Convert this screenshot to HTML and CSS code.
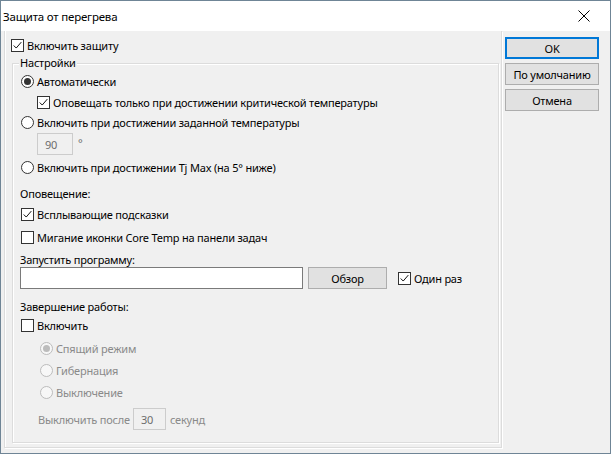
FILE: index.html
```html
<!DOCTYPE html>
<html lang="ru">
<head>
    <meta charset="UTF-8">
    <title>Защита от перегрева</title>
    <link rel="stylesheet" href="styles.css">
</head>
<body>
    <div class="window">
        <div class="titlebar">
            <span class="title">Защита от перегрева</span>
            <svg class="close" width="12" height="12" viewBox="0 0 12 12">
                <path d="M0.5 0.5 L11.5 11.5 M11.5 0.5 L0.5 11.5" stroke="#000" stroke-width="1" fill="none"/>
            </svg>
        </div>
        <div class="client">
            <div class="panel">
                <div class="row main-check">
                    <span class="check on"><svg viewBox="0 0 13 13"><path d="M2 6.5 L5 9.5 L11 2.5" /></svg></span>
                    <span>Включить защиту</span>
                </div>
                <div class="group">
                    <span class="legend">Настройки</span>
                    <div class="row r-auto"><span class="radio on"></span><span>Автоматически</span></div>
                    <div class="row r-notify indent">
                        <span class="check on"><svg viewBox="0 0 13 13"><path d="M2 6.5 L5 9.5 L11 2.5" /></svg></span>
                        <span>Оповещать только при достижении критической температуры</span>
                    </div>
                    <div class="row r-temp"><span class="radio"></span><span>Включить при достижении заданной температуры</span></div>
                    <div class="row r-field indent">
                        <span class="field disabled small">90</span>
                        <span class="deg">°</span>
                    </div>
                    <div class="row r-tj"><span class="radio"></span><span>Включить при достижении Tj Max (на 5° ниже)</span></div>

                    <div class="row r-head caption">Оповещение:</div>
                    <div class="row r-popup">
                        <span class="check on"><svg viewBox="0 0 13 13"><path d="M2 6.5 L5 9.5 L11 2.5" /></svg></span>
                        <span>Всплывающие подсказки</span>
                    </div>
                    <div class="row r-blink"><span class="check"></span><span>Мигание иконки Core Temp на панели задач</span></div>

                    <div class="row r-run caption">Запустить программу:</div>
                    <div class="row r-program">
                        <span class="field wide"></span>
                        <button class="btn browse">Обзор</button>
                        <span class="check on once"><svg viewBox="0 0 13 13"><path d="M2 6.5 L5 9.5 L11 2.5" /></svg></span>
                        <span>Один раз</span>
                    </div>

                    <div class="row r-shut caption">Завершение работы:</div>
                    <div class="row r-enable"><span class="check"></span><span>Включить</span></div>
                    <div class="row r-sleep sub off"><span class="radio on"></span><span>Спящий режим</span></div>
                    <div class="row r-hib sub off"><span class="radio"></span><span>Гибернация</span></div>
                    <div class="row r-power sub off"><span class="radio"></span><span>Выключение</span></div>
                    <div class="row r-after off">
                        <span>Выключить после</span>
                        <span class="field disabled tiny">30</span>
                        <span>секунд</span>
                    </div>
                </div>
            </div>
            <div class="buttons">
                <button class="btn default">OK</button>
                <button class="btn">По умолчанию</button>
                <button class="btn">Отмена</button>
            </div>
        </div>
    </div>
</body>
</html>
```

FILE: styles.css
```css
body {
    margin: 0;
    font-family: "Noto Sans", "Open Sans", sans-serif;
    font-size: 11px;
    letter-spacing: -0.2px;
    color: #000;
    background: #f0f0f0;
}
.window {
    width: 609px;
    height: 452px;
    border: 1px solid #6f8596;
    display: flex;
    flex-direction: column;
    background: #f0f0f0;
}
.titlebar {
    height: 30px;
    background: #fff;
    display: flex;
    align-items: center;
    justify-content: space-between;
    padding: 0 20px 0 2px;
}
.title {
    font-size: 11.5px;
}
.close {
    display: block;
}
.client {
    flex-grow: 1;
    display: flex;
    padding: 0 0 5px 3px;
}
.panel {
    width: 498px;
    border: 1px solid #dcdcdc;
    border-top: none;
    box-shadow: 1px 1px 0 #fff, inset 1px 0 0 #fff;
    padding: 6px 0 0 7px;
    box-sizing: border-box;
}
.buttons {
    display: flex;
    flex-direction: column;
    gap: 4px;
    padding: 6px 0 0 3px;
}
.btn {
    font-family: inherit;
    font-size: 11px;
    letter-spacing: -0.2px;
    color: #000;
    width: 94px;
    height: 22px;
    padding: 0;
    background: #e1e1e1;
    border: 1px solid #adadad;
}
.btn.default {
    border-color: #0078d7;
    box-shadow: inset 0 0 0 1px #0078d7;
}
.row {
    display: flex;
    align-items: center;
    height: 16px;
    white-space: nowrap;
}
.main-check {
    margin-left: -1px;
}
.check {
    width: 11px;
    height: 11px;
    border: 1px solid #333;
    background: #fff;
    margin-right: 3px;
    flex-shrink: 0;
}
.check svg {
    display: block;
    width: 11px;
    height: 11px;
}
.check path {
    fill: none;
    stroke: #000;
    stroke-width: 1.1;
}
.radio {
    width: 11px;
    height: 11px;
    border: 1px solid #333;
    border-radius: 50%;
    background: #fff;
    margin-right: 3px;
    flex-shrink: 0;
    display: flex;
    align-items: center;
    justify-content: center;
}
.radio.on::after {
    content: "";
    width: 7px;
    height: 7px;
    border-radius: 50%;
    background: #333;
}
.group {
    position: relative;
    width: 487px;
    height: 380px;
    box-sizing: border-box;
    margin-top: 10px;
    border: 1px solid #dcdcdc;
    box-shadow: 1px 1px 0 #fff, inset 1px 1px 0 #fff;
    padding: 0 0 0 8px;
}
.legend {
    position: absolute;
    top: -9px;
    left: 6px;
    padding: 0 1px;
    background: #f0f0f0;
    line-height: 16px;
}
.indent {
    margin-left: 16px;
}
.caption {
    margin-left: -1px;
}
.field {
    display: flex;
    align-items: center;
    box-sizing: border-box;
    height: 22px;
    background: #fff;
    border: 1px solid #7a7a7a;
}
.field.disabled {
    background: #f0f0f0;
    border-color: #cccccc;
    color: #6d6d6d;
    padding-left: 7px;
}
.field.small {
    width: 36px;
}
.field.tiny {
    width: 33px;
    margin: 0 4px 0 3px;
}
.field.wide {
    width: 283px;
    margin-left: -1px;
}
.deg {
    color: #6d6d6d;
    margin-left: 5px;
    align-self: flex-start;
    margin-top: 2px;
}
.r-auto { margin-top: 9px; }
.r-notify { margin-top: 5px; }
.r-temp { margin-top: 4px; }
.r-field { margin-top: 3px; height: 22px; }
.r-tj { margin-top: 4px; }
.r-head { margin-top: 10px; }
.r-popup { margin-top: 5px; }
.r-blink { margin-top: 7px; }
.r-run { margin-top: 6px; }
.r-program { margin-top: 0; height: 22px; }
.r-shut { margin-top: 9px; }
.r-enable { margin-top: 3px; }
.r-sleep { margin-top: 7px; }
.r-hib { margin-top: 6px; }
.r-power { margin-top: 6px; }
.r-after { margin-top: 8px; height: 22px; margin-left: 17px; }
.browse {
    width: 79px;
    margin-left: 5px;
}
.once {
    margin-left: 11px;
}
.sub {
    margin-left: 19px;
}
.off {
    color: #8a8a8a;
}
.off .radio {
    border-color: #bcbcbc;
    background: #f7f7f7;
}
.off .radio.on::after {
    background: #bcbcbc;
}
```
